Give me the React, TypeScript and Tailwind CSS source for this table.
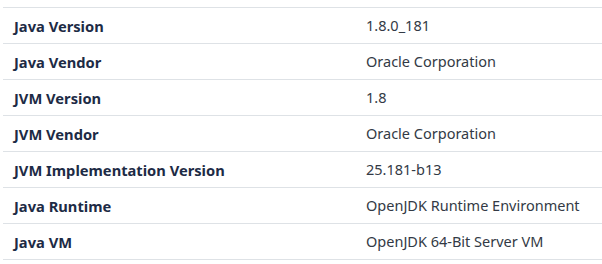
const rows: [string, string][] = [
  ["Java Version", "1.8.0_181"],
  ["Java Vendor", "Oracle Corporation"],
  ["JVM Version", "1.8"],
  ["JVM Vendor", "Oracle Corporation"],
  ["JVM Implementation Version", "25.181-b13"],
  ["Java Runtime", "OpenJDK Runtime Environment"],
  ["Java VM", "OpenJDK 64-Bit Server VM"],
]

const App = () => {
  return (
    <div className="w-[602px] h-[264px] bg-white pt-[7px] pl-[3px] font-['Noto_Sans',sans-serif]">
      <div className="border-b border-[#dee2e6]">
        {rows.map(([label, value]) => (
          <div key={label} className="grid grid-cols-[352px_1fr] h-[36px] items-center border-t border-[#dee2e6] pt-[1px]">
            <span className="px-[11px] text-[14.7px] font-bold text-[#1d2b45]">{label}</span>
            <span className="px-[11px] text-[14.5px] text-[#333a45]">{value}</span>
          </div>
        ))}
      </div>
    </div>
  )
}

export default App
